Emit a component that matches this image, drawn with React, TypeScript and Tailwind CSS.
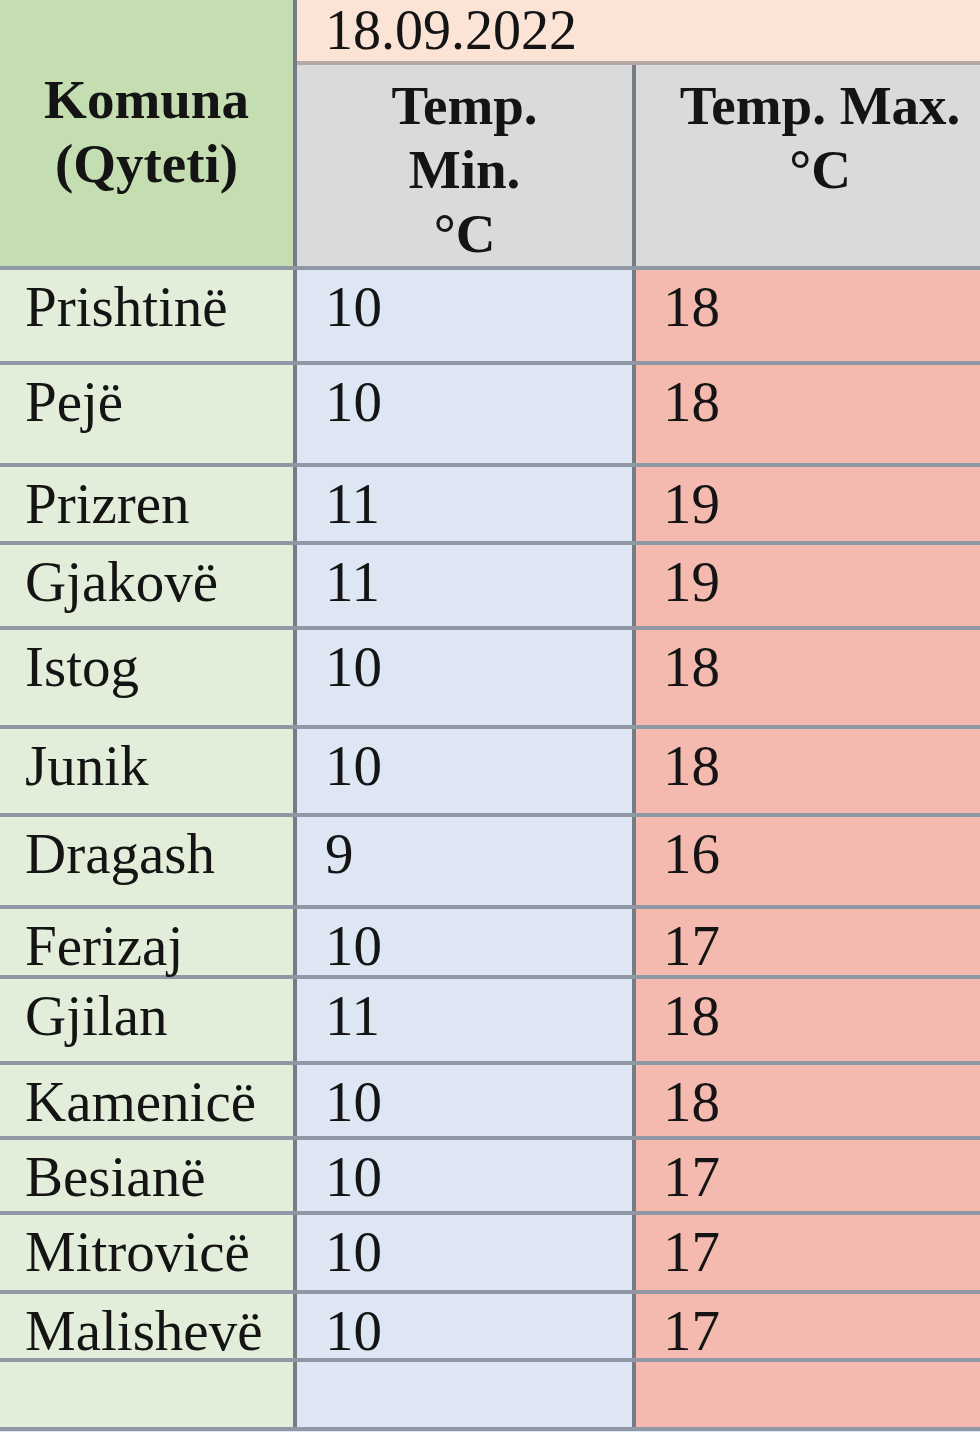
const rows = [
  { city: "Prishtinë", min: "10", max: "18", h: "h-[95px]" },
  { city: "Pejë", min: "10", max: "18", h: "h-[102px]" },
  { city: "Prizren", min: "11", max: "19", h: "h-[78px]" },
  { city: "Gjakovë", min: "11", max: "19", h: "h-[85px]" },
  { city: "Istog", min: "10", max: "18", h: "h-[99px]" },
  { city: "Junik", min: "10", max: "18", h: "h-[88px]" },
  { city: "Dragash", min: "9", max: "16", h: "h-[92px]" },
  { city: "Ferizaj", min: "10", max: "17", h: "h-[70px]" },
  { city: "Gjilan", min: "11", max: "18", h: "h-[86px]" },
  { city: "Kamenicë", min: "10", max: "18", h: "h-[75px]" },
  { city: "Besianë", min: "10", max: "17", h: "h-[75px]" },
  { city: "Mitrovicë", min: "10", max: "17", h: "h-[79px]" },
  { city: "Malishevë", min: "10", max: "17", h: "h-[68px]" },
  { city: "", min: "", max: "", h: "h-[69px]" },
];

const App = () => {
  return (
    <div className="w-[980px] h-[1432px] overflow-hidden bg-[#dde6f2] font-['Liberation_Serif','Times_New_Roman',serif] text-[#141414]">
      <div className="w-[1004px]">
        {/* шапка */}
        <div className="flex h-[270px] border-b-4 border-[#9198a5]">
          <div className="w-[293px] bg-[#c4deb1] flex flex-col items-center justify-center pb-[2px] text-[55px] font-bold leading-[64px]">
            <span>Komuna</span>
            <span>(Qyteti)</span>
          </div>
          <div className="w-[4px] bg-[#767c86]" />
          <div className="flex-1 flex flex-col">
            <div className="h-[70px] bg-[#fbe3d6] border-b-4 border-[#b3aaa8] pl-[28px] text-[56px] leading-[61px]">
              18.09.2022
            </div>
            <div className="flex-1 flex bg-[#d9dadc] text-[55px] font-bold leading-[64px] text-center">
              <div className="w-[335px] pt-[9px] flex flex-col items-center">
                <span>Temp.</span>
                <span>Min.</span>
                <span>°C</span>
              </div>
              <div className="w-[4px] bg-[#767c86]" />
              <div className="flex-1 pt-[9px] flex flex-col items-center">
                <span>Temp. Max.</span>
                <span>°C</span>
              </div>
            </div>
          </div>
        </div>

        {/* строки */}
        {rows.map((r, i) => (
          <div key={i} className={`flex ${r.h} border-b-4 border-[#9198a5] text-[57px] leading-[64px]`}>
            <div className="w-[293px] bg-[#e2eeda] pl-[25px] pt-[5px]">{r.city}</div>
            <div className="w-[4px] bg-[#767c86]" />
            <div className="w-[335px] bg-[#dde6f2] pl-[28px] pt-[5px]">{r.min}</div>
            <div className="w-[4px] bg-[#767c86]" />
            <div className="flex-1 bg-[#f4b9af] pl-[27px] pt-[5px]">{r.max}</div>
          </div>
        ))}
      </div>
    </div>
  );
};

export default App;
